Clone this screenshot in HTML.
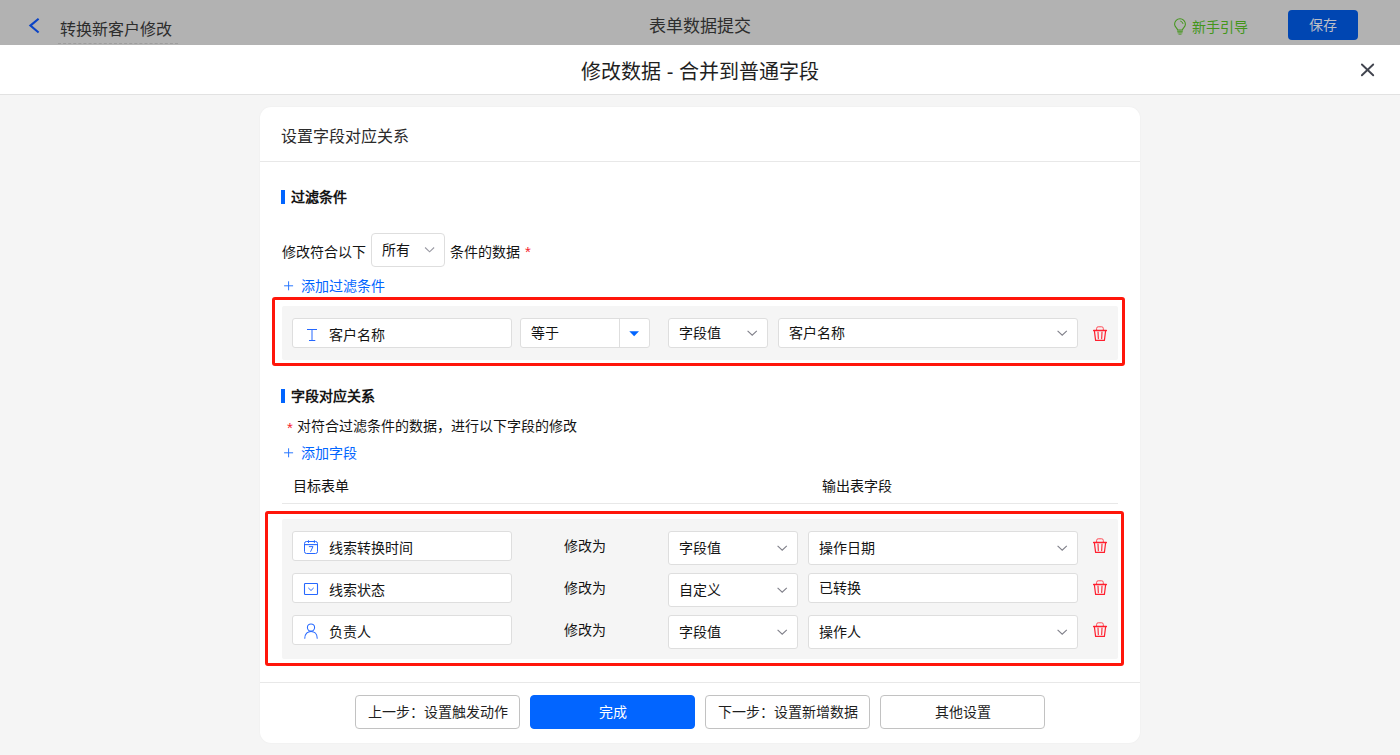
<!DOCTYPE html>
<html lang="zh-CN">
<head>
<meta charset="utf-8">
<title>修改数据 - 合并到普通字段</title>
<style>
*{box-sizing:border-box;margin:0;padding:0}
html,body{width:1400px;height:755px;overflow:hidden}
body{position:relative;background:#f5f5f5;font-family:"Liberation Sans",sans-serif;font-size:14px;color:#141414}
.abs{position:absolute}
.t{position:absolute;white-space:nowrap;line-height:20px;height:20px;text-align:justify;text-align-last:justify}
.j{display:inline-block;text-align:justify;text-align-last:justify;white-space:nowrap;vertical-align:top}
/* top bar */
#topbar{position:absolute;left:0;top:0;width:1400px;height:45px;background:#b2b2b2}
#save{position:absolute;left:1288px;top:10px;width:70px;height:30px;border-radius:4px;background:#0046b2;color:#bcbfc6;font-size:14px;line-height:30px;text-align:center}
/* modal header */
#mhead{position:absolute;left:0;top:45px;width:1400px;height:50px;background:#fff;border-bottom:1px solid #e2e2e2}
#mtitle{position:absolute;left:0;top:14px;width:1400px;text-align:center;font-size:20px;line-height:26px;color:#1f1f1f}
/* card */
#card{position:absolute;left:260px;top:107px;width:880px;height:636px;background:#fff;border-radius:11px;box-shadow:0 0 2px rgba(0,0,0,.05)}
.hline{position:absolute;height:1px;background:#e8e8e8}
.bar{position:absolute;width:4px;height:14px;background:#0265ff}
.bold{font-weight:bold;color:#141414}
.blue{color:#0265ff}
.red{color:#f5222d}
.box{position:absolute;background:#fff;border:1px solid #dedede;border-radius:3px}
.gray{position:absolute;background:#f5f5f5;border-radius:2px}
.redbox{position:absolute;border:3px solid #ff160a;border-radius:3px}
.btn{position:absolute;top:695px;width:165px;height:34px;border-radius:4px;border:1px solid #c2c2c2;background:#fff;text-align:center;line-height:32px;font-size:14px;color:#1f1f1f}
.btn.primary{background:#0265ff;border-color:#0265ff;color:#fff}
svg{position:absolute;overflow:visible}
</style>
</head>
<body>

<!-- ===== top bar ===== -->
<div id="topbar">
  <svg style="left:0;top:0" width="60" height="45"><polyline points="38.6,18.7 30.4,25.6 38.6,32.5" fill="none" stroke="#0a43c6" stroke-width="2.1" stroke-linecap="butt" stroke-linejoin="miter"/></svg>
  <div class="t" style="left:60px;top:20px;font-size:16px;color:#2d2d2d;width:112px">转换新客户修改</div>
  <div class="abs" style="left:58px;top:43px;width:120px;height:0;border-top:1px dashed #9d9d9d"></div>
  <div class="t" style="left:649px;top:16px;font-size:17px;line-height:22px;color:#2d2d2d;width:102px">表单数据提交</div>
  <svg style="left:1170px;top:14px" width="20" height="24" fill="none" stroke="#43961a" stroke-width="1.05" stroke-linecap="round">
    <path d="M7.5 15.9 C7.5 14.2 4.6 13.2 4.6 10.2 A5.4 5.4 0 0 1 15.4 10.2 C15.4 13.2 12.5 14.2 12.5 15.9 Z"/>
    <path d="M10.6 7.1 A3.1 3.1 0 0 1 13 9.6" stroke-width="0.9"/>
    <path d="M7.6 17.4 H12.4 M7.9 18.8 H12.1 M8.9 20.2 H11.1" stroke-width="0.85"/>
  </svg>
  <div class="t" style="left:1192px;top:17px;color:#43961a;width:56px">新手引导</div>
  <div id="save"><span class="j" style="width:28px">保存</span></div>
</div>

<!-- ===== modal header ===== -->
<div id="mhead">
  <div id="mtitle"><span class="j" style="width:238px">修改数据 - 合并到普通字段</span></div>
  <svg style="left:1355px;top:12px" width="26" height="26"><path d="M6.9 7.5 L18.2 18.3 M18.2 7.5 L6.9 18.3" stroke="#42454f" stroke-width="1.9" stroke-linecap="round" fill="none"/></svg>
</div>

<!-- ===== card ===== -->
<div id="card"></div>
<div class="t" style="left:281px;top:127px;font-size:16px;color:#2b2b2b;width:128px">设置字段对应关系</div>
<div class="hline" style="left:260px;top:161px;width:880px"></div>

<!-- section 1 -->
<div class="bar" style="left:281px;top:190px"></div>
<div class="t bold" style="left:291px;top:187px;width:56px">过滤条件</div>

<div class="t" style="left:282px;top:242px;width:84px">修改符合以下</div>
<div class="box" style="left:371px;top:233px;width:74px;height:34px;border-radius:4px"></div>
<div class="t" style="left:382px;top:240px;width:28px">所有</div>
<svg style="left:424.8px;top:246.4px" width="10" height="8"><polyline points="0.1,1.5 4.6,5.8 9.1,1.5" fill="none" stroke="#9a9aa4" stroke-width="1.15"/></svg>
<div class="t" style="left:450px;top:242px;width:70px">条件的数据</div>
<div class="t red" style="left:525px;top:242px;font-size:15px">*</div>

<svg style="left:284px;top:281px" width="10" height="10"><path d="M4.6 0.3 V9.3 M0.1 4.8 H9.1" stroke="#2a78ff" stroke-width="1" fill="none"/></svg>
<div class="t blue" style="left:301px;top:276px;width:84px">添加过滤条件</div>

<!-- filter row -->
<div class="gray" style="left:282px;top:306px;width:836px;height:54px"></div>
<div class="box" style="left:292px;top:318px;width:220px;height:30px"></div>
<svg style="left:304px;top:326px" width="16" height="16"><path d="M3 3.5 H13 M8 3.5 V14 M5 14.5 H11.3" stroke="#2668ff" stroke-width="1" fill="none"/></svg>
<div class="t" style="left:329px;top:325px;width:56px">客户名称</div>

<div class="box" style="left:520px;top:318px;width:130px;height:30px"></div>
<div class="abs" style="left:619px;top:319px;width:1px;height:28px;background:#dedede"></div>
<div class="t" style="left:531px;top:323px;width:28px">等于</div>
<svg style="left:629px;top:330px" width="11" height="7"><path d="M0.3 1.2 H10 L5.15 6.2 Z" fill="#0265ff"/></svg>

<div class="box" style="left:668px;top:318px;width:100px;height:30px"></div>
<div class="t" style="left:679px;top:323px;width:42px">字段值</div>
<svg style="left:747px;top:329px" width="11" height="8"><polyline points="0.6,1.9 5.2,6.1 9.8,1.9" fill="none" stroke="#80808a" stroke-width="1.15"/></svg>

<div class="box" style="left:778px;top:318px;width:300px;height:30px"></div>
<div class="t" style="left:789px;top:323px;width:56px">客户名称</div>
<svg style="left:1057px;top:329px" width="11" height="8"><polyline points="0.6,1.9 5.2,6.1 9.8,1.9" fill="none" stroke="#80808a" stroke-width="1.15"/></svg>

<svg class="trash" style="left:1091px;top:324px" width="18" height="18" fill="none" stroke="#ff1f2e" stroke-linecap="round" stroke-linejoin="round">
  <path d="M5.6 6.4 V4.4 Q5.6 2.8 7.2 2.8 H10.7 Q12.3 2.8 12.3 4.4 V6.4" stroke-width="1" stroke="#ff4a55"/>
  <path d="M2.6 6.5 H15.4" stroke-width="1.3"/>
  <path d="M3.4 6.8 L4.6 16.3 H13.4 L14.6 6.8" stroke-width="1.2"/>
  <path d="M7 8 L7.3 14.6 M11 8 L10.7 14.6" stroke-width="1.1"/>
</svg>

<div class="redbox" style="left:272px;top:297px;width:853px;height:69px"></div>

<!-- section 2 -->
<div class="bar" style="left:281px;top:389px"></div>
<div class="t bold" style="left:291px;top:386px;width:84px">字段对应关系</div>
<div class="t red" style="left:287px;top:418px;font-size:15px">*</div>
<div class="t" style="left:297px;top:416px;width:280px">对符合过滤条件的数据，进行以下字段的修改</div>

<svg style="left:284px;top:448px" width="10" height="10"><path d="M4.6 0.3 V9.3 M0.1 4.8 H9.1" stroke="#2a78ff" stroke-width="1" fill="none"/></svg>
<div class="t blue" style="left:301px;top:443px;width:56px">添加字段</div>

<div class="t" style="left:293px;top:476px;width:56px">目标表单</div>
<div class="t" style="left:822px;top:476px;width:70px">输出表字段</div>
<div class="hline" style="left:282px;top:503px;width:836px"></div>

<div class="gray" style="left:282px;top:519px;width:836px;height:140px"></div>

<!-- row 1 -->
<div class="box" style="left:292px;top:531px;width:220px;height:30px"></div>
<svg style="left:302px;top:538px" width="20" height="18" fill="none" stroke="#2668ff" stroke-width="1">
  <rect x="2.5" y="3.5" width="13" height="12" rx="2"/>
  <path d="M2.5 6.6 H15.5" stroke-width="1.1"/>
  <path d="M6.5 2.2 V5 M12.4 2.2 V5" stroke-width="0.9"/>
  <path d="M6.9 8.6 H11 L8.5 13.8" stroke-width="0.95"/>
</svg>
<div class="t" style="left:329px;top:538px;width:84px">线索转换时间</div>
<div class="t" style="left:564px;top:536px;width:42px">修改为</div>
<div class="box" style="left:668px;top:531px;width:130px;height:34px"></div>
<div class="t" style="left:679px;top:538px;width:42px">字段值</div>
<svg style="left:777px;top:544px" width="11" height="8"><polyline points="0.6,1.9 5.2,6.1 9.8,1.9" fill="none" stroke="#80808a" stroke-width="1.15"/></svg>
<div class="box" style="left:808px;top:531px;width:270px;height:34px"></div>
<div class="t" style="left:819px;top:538px;width:56px">操作日期</div>
<svg style="left:1057px;top:544px" width="11" height="8"><polyline points="0.6,1.9 5.2,6.1 9.8,1.9" fill="none" stroke="#80808a" stroke-width="1.15"/></svg>
<svg class="trash" style="left:1091px;top:536px" width="18" height="18" fill="none" stroke="#ff1f2e" stroke-linecap="round" stroke-linejoin="round">
  <path d="M5.6 6.4 V4.4 Q5.6 2.8 7.2 2.8 H10.7 Q12.3 2.8 12.3 4.4 V6.4" stroke-width="1" stroke="#ff4a55"/>
  <path d="M2.6 6.5 H15.4" stroke-width="1.3"/>
  <path d="M3.4 6.8 L4.6 16.3 H13.4 L14.6 6.8" stroke-width="1.2"/>
  <path d="M7 8 L7.3 14.6 M11 8 L10.7 14.6" stroke-width="1.1"/>
</svg>

<!-- row 2 -->
<div class="box" style="left:292px;top:573px;width:220px;height:30px"></div>
<svg style="left:302px;top:580px" width="20" height="18" fill="none" stroke="#2668ff" stroke-width="1.1">
  <rect x="2.5" y="3.5" width="13" height="11" rx="0.8"/>
  <polyline points="6.3,7.9 9,10.5 11.7,7.9" stroke-width="1"/>
</svg>
<div class="t" style="left:329px;top:580px;width:56px">线索状态</div>
<div class="t" style="left:564px;top:578px;width:42px">修改为</div>
<div class="box" style="left:668px;top:573px;width:130px;height:34px"></div>
<div class="t" style="left:679px;top:580px;width:42px">自定义</div>
<svg style="left:777px;top:586px" width="11" height="8"><polyline points="0.6,1.9 5.2,6.1 9.8,1.9" fill="none" stroke="#80808a" stroke-width="1.15"/></svg>
<div class="box" style="left:808px;top:573px;width:270px;height:30px"></div>
<div class="t" style="left:819px;top:578px;width:42px">已转换</div>
<svg class="trash" style="left:1091px;top:578px" width="18" height="18" fill="none" stroke="#ff1f2e" stroke-linecap="round" stroke-linejoin="round">
  <path d="M5.6 6.4 V4.4 Q5.6 2.8 7.2 2.8 H10.7 Q12.3 2.8 12.3 4.4 V6.4" stroke-width="1" stroke="#ff4a55"/>
  <path d="M2.6 6.5 H15.4" stroke-width="1.3"/>
  <path d="M3.4 6.8 L4.6 16.3 H13.4 L14.6 6.8" stroke-width="1.2"/>
  <path d="M7 8 L7.3 14.6 M11 8 L10.7 14.6" stroke-width="1.1"/>
</svg>

<!-- row 3 -->
<div class="box" style="left:292px;top:615px;width:220px;height:30px"></div>
<svg style="left:302px;top:620px" width="20" height="20" fill="none" stroke="#2668ff" stroke-width="1.05" stroke-linecap="round">
  <circle cx="9" cy="7.5" r="3.6"/>
  <path d="M2.8 18.3 C2.8 13.8 5.6 11.4 9 11.4 C12.4 11.4 15.2 13.8 15.2 18.3"/>
</svg>
<div class="t" style="left:329px;top:622px;width:42px">负责人</div>
<div class="t" style="left:564px;top:620px;width:42px">修改为</div>
<div class="box" style="left:668px;top:615px;width:130px;height:34px"></div>
<div class="t" style="left:679px;top:622px;width:42px">字段值</div>
<svg style="left:777px;top:628px" width="11" height="8"><polyline points="0.6,1.9 5.2,6.1 9.8,1.9" fill="none" stroke="#80808a" stroke-width="1.15"/></svg>
<div class="box" style="left:808px;top:615px;width:270px;height:34px"></div>
<div class="t" style="left:819px;top:622px;width:42px">操作人</div>
<svg style="left:1057px;top:628px" width="11" height="8"><polyline points="0.6,1.9 5.2,6.1 9.8,1.9" fill="none" stroke="#80808a" stroke-width="1.15"/></svg>
<svg class="trash" style="left:1091px;top:620px" width="18" height="18" fill="none" stroke="#ff1f2e" stroke-linecap="round" stroke-linejoin="round">
  <path d="M5.6 6.4 V4.4 Q5.6 2.8 7.2 2.8 H10.7 Q12.3 2.8 12.3 4.4 V6.4" stroke-width="1" stroke="#ff4a55"/>
  <path d="M2.6 6.5 H15.4" stroke-width="1.3"/>
  <path d="M3.4 6.8 L4.6 16.3 H13.4 L14.6 6.8" stroke-width="1.2"/>
  <path d="M7 8 L7.3 14.6 M11 8 L10.7 14.6" stroke-width="1.1"/>
</svg>

<div class="redbox" style="left:265px;top:511px;width:859px;height:155px"></div>

<!-- footer -->
<div class="hline" style="left:260px;top:682px;width:880px"></div>
<div class="btn" style="left:355px"><span class="j" style="width:140px">上一步：设置触发动作</span></div>
<div class="btn primary" style="left:530px"><span class="j" style="width:28px">完成</span></div>
<div class="btn" style="left:705px"><span class="j" style="width:140px">下一步：设置新增数据</span></div>
<div class="btn" style="left:880px"><span class="j" style="width:56px">其他设置</span></div>

</body>
</html>
